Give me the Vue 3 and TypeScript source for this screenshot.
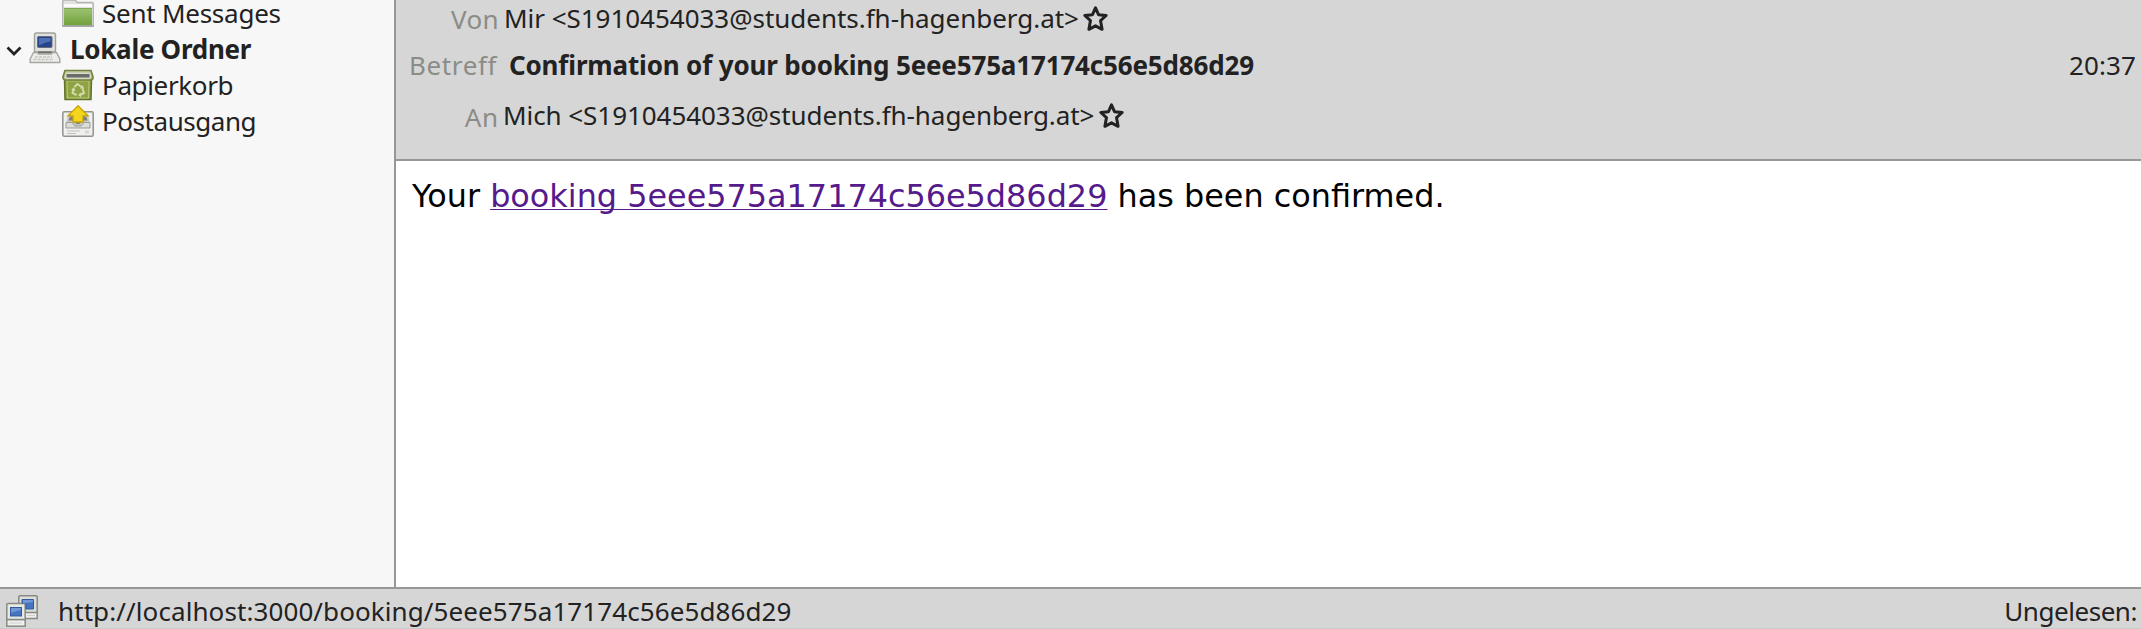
<script setup lang="ts">
interface Folder {
  id: string
  label: string
}

const localFolders: Folder[] = [
  { id: 'trash', label: 'Papierkorb' },
  { id: 'outbox', label: 'Postausgang' },
]

const bookingId = '5eee575a17174c56e5d86d29'
const address = '<S1910454033@students.fh-hagenberg.at>'
const starPath = 'M13.5 2.8 L16.5 9.7 L24.2 10.5 L18.5 15.6 L20.1 24.3 L13.5 20.8 L6.9 24.3 L8.5 15.6 L2.8 10.5 L10.5 9.7 Z'
</script>

<template>
  <div class="client">
    <div class="panes">
      <nav class="sidebar">
        <div class="row child sent">
          <svg class="icon" viewBox="0 0 32 32">
            <defs>
              <linearGradient id="folderGreen" x1="0" y1="0" x2="0" y2="1">
                <stop offset="0" stop-color="#9cc372" />
                <stop offset="1" stop-color="#72a23c" />
              </linearGradient>
            </defs>
            <path d="M.7 31V6.500q0-1.500 1.500-1.500h11l2 2.500H30q1.300 0 1.300 1.500v22z" fill="#e3e3e0" stroke="#b3b3b0" stroke-width="1.300" />
            <path d="M2 10.500h28" stroke="#fff" stroke-width="2.500" />
            <rect x="2" y="13" width="28" height="17" fill="url(#folderGreen)" />
            <path d="M2 13.500h28" stroke="#7ea64f" />
            <path d="M.5 31h31" stroke="#999b94" stroke-width="1.400" />
          </svg>
          <span class="name">Sent Messages</span>
        </div>
        <div class="row account">
          <svg class="chevron" viewBox="0 0 16 10"><path d="M1.500 1.500 8 8l6.500-6.500" fill="none" stroke="#222" stroke-width="2.700" /></svg>
          <svg class="icon computer" viewBox="0 0 32 32">
            <rect x="5.500" y="1" width="21" height="19" rx="1.800" fill="#e0e0dc" stroke="#a0a19c" stroke-width="1.400" />
            <rect x="8.500" y="4.500" width="14.500" height="11" rx="1" fill="#27458a" stroke="#686c74" />
            <path d="M10 6h11.500v3.500q-5 .5-11.500 4z" fill="#5070b4" />
            <path d="M9 20.500h14" stroke="#6d6f6a" stroke-width="2.200" />
            <path d="M4.500 20.500 1.200 27v3.500h29.600V27l-3.300-6.500h-4l-1 1.500h-13l-1-1.500z" fill="#ececea" stroke="#a5a6a1" stroke-width="1.400" />
            <path d="M6 25h17M4.500 27.500h19" stroke="#c4c5bf" stroke-width="1.300" stroke-dasharray="3 1" />
          </svg>
          <span class="name">Lokale Ordner</span>
        </div>
        <div v-for="folder in localFolders" :key="folder.id" class="row child" :class="folder.id">
          <svg v-if="folder.id === 'trash'" class="icon" viewBox="0 0 32 32">
            <path d="M2.500 9h27L29 30.500H3z" fill="#8fa344" stroke="#60722b" stroke-width="1.500" />
            <path d="M5 12h22l-.5 17h-21z" fill="none" stroke="#b8c676" />
            <path d="M3 1.500h26l2 6.500q0 3-2.500 3h-25Q1 11 1 8z" fill="#c5cba6" stroke="#74823f" stroke-width="1.700" />
            <rect x="4" y="4.500" width="24" height="4.500" rx="1.200" fill="#686d68" stroke="#eceee5" stroke-width=".8" />
            <g opacity=".85">
              <path d="m12.500 18 3-3 4 3M20.500 20l1.500 4-4 2M14.500 26l-4-2 1-4" fill="none" stroke="#dde6b5" stroke-width="2" />
              <path d="m18 19.500 4 .5-1-4zM19 23.500l-3 2.500 3 2.500zM9 21l3-3 1.500 4z" fill="#dde6b5" />
            </g>
          </svg>
          <svg v-else class="icon" viewBox="0 0 32 32">
            <rect x=".8" y="6.800" width="30.400" height="24.400" rx="1.500" fill="#f0f0ee" stroke="#91938c" stroke-width="1.500" />
            <path d="m6 9.500-2 8.500v5h24v-5l-2-8.500z" fill="#c9cac5" />
            <path d="M8 11.500h16l1.500 4h-5l-3 3.500h-3l-3-3.500h-5z" fill="#7d7f7a" />
            <path d="M4 17.500h6l3 3.500h6l3-3.500h6V23H4z" fill="#dcdcd9" stroke="#9b9d96" />
            <path d="M5 26h13M5 28.500h9" stroke="#c0c1bc" stroke-width="1.200" />
            <path d="M23 25.500h4v3h-4z" fill="#d7d8d4" />
            <path d="m16 .8 10 10h-5V17H11v-6.200H6z" fill="#f4d51e" stroke="#c7a006" stroke-width="1.300" />
          </svg>
          <span class="name">{{ folder.label }}</span>
        </div>
      </nav>

      <main class="message">
        <header class="headers">
          <div class="field from">
            <span class="label">Von</span>
            <span class="value">Mir {{ address }}</span>
            <svg class="star" viewBox="0 0 27 27"><path :d="starPath" /></svg>
          </div>
          <div class="field subject">
            <span class="label">Betreff</span>
            <span class="value">Confirmation of your booking {{ bookingId }}</span>
            <time class="time">20:37</time>
          </div>
          <div class="field to">
            <span class="label">An</span>
            <span class="value">Mich {{ address }}</span>
            <svg class="star" viewBox="0 0 27 27"><path :d="starPath" /></svg>
          </div>
        </header>
        <article class="body">Your <a href="#" @click.prevent>booking {{ bookingId }}</a> has been confirmed.</article>
      </main>
    </div>

    <footer class="status">
      <svg class="network" viewBox="0 0 32 32">
        <g stroke="#878984" stroke-width="1.500">
          <rect x="14.500" y="17" width="16.700" height="6.500" fill="#eeeeec" />
          <rect x="12.800" y=".8" width="18.400" height="16.700" rx="1" fill="#deded9" />
          <rect x=".8" y="24.500" width="18.400" height="6.700" fill="#f1f1ef" />
          <rect x=".8" y="8.500" width="18.400" height="16" rx="1" fill="#e8e8e4" />
        </g>
        <g fill="#4774c0" stroke="#315a9e">
          <path d="M16 4.500h11.500v9.500H20V8h-4z" />
          <rect x="4.500" y="12.500" width="11" height="8.500" />
        </g>
        <path d="M5 13h10v2q-5 1-10 3zM17 5h10v2l-7 1h-3z" fill="#7097d4" />
        <path d="M21 20.500h8M3 28h13" stroke="#d0d1cc" />
      </svg>
      <span class="url">http://localhost:3000/booking/{{ bookingId }}</span>
      <span class="unread">Ungelesen:</span>
    </footer>
  </div>
</template>

<style>
body {
  margin: 0;
  overflow: hidden;
}
</style>

<style scoped>
.client {
  display: flex;
  flex-direction: column;
  box-sizing: border-box;
  height: 629px;
  overflow: hidden;
  background: #fff;
  color: #222;
  font: 26px/36px "Noto Sans", "Open Sans", sans-serif;
  white-space: nowrap;
}
.panes {
  display: flex;
  height: 587px;
}
.sidebar {
  box-sizing: border-box;
  width: 396px;
  border-right: 2px solid #979797;
  background: #f7f7f7;
  overflow: hidden;
}
.row {
  display: flex;
  align-items: center;
  height: 36px;
}
.row.sent {
  align-items: flex-start;
  height: 31px;
  line-height: 26px;
}
.child {
  padding-left: 62px;
  gap: 8px;
}
.icon {
  flex: none;
  width: 32px;
  height: 32px;
}
.sent .icon {
  margin-top: -5px;
}
.sent .name {
  letter-spacing: -0.25px;
}
.account {
  padding-left: 6px;
  font-weight: 700;
  letter-spacing: -0.27px;
}
.chevron {
  width: 16px;
  height: 10px;
  margin: 3px 7px 0 0;
}
.computer {
  margin: -2px 9px 0 0;
}
.trash .name {
  letter-spacing: -0.35px;
}
.outbox .name {
  letter-spacing: -0.45px;
}
.message {
  flex: 1;
  min-width: 0;
}
.headers {
  display: flex;
  flex-direction: column;
  box-sizing: border-box;
  height: 161px;
  border-bottom: 2px solid #979797;
  background: #d6d6d6;
}
.field {
  display: flex;
  align-items: flex-start;
  height: 36px;
}
.label {
  width: 103px;
  margin-right: 5px;
  text-align: right;
  color: #8b8c86;
  letter-spacing: 0.4px;
}
.from .label {
  padding-top: 1px;
}
.from .value {
  letter-spacing: -0.03px;
}
.subject {
  margin-top: 11px;
}
.subject .label {
  width: 101px;
  margin-right: 12px;
  letter-spacing: 0.6px;
}
.subject .value {
  font-weight: 700;
  letter-spacing: -0.16px;
}
.time {
  margin: 0 5px 0 auto;
  letter-spacing: 0.1px;
}
.to {
  margin-top: 14px;
}
.to .label {
  padding-top: 2px;
  letter-spacing: 0.8px;
}
.to .value {
  margin-left: -1px;
  letter-spacing: -0.06px;
}
.star {
  flex: none;
  width: 27px;
  height: 27px;
  margin: 5px 0 0 4px;
  fill: none;
  stroke: #222;
  stroke-width: 3;
  stroke-linejoin: round;
}
.from .star {
  margin-left: 3px;
}
.body {
  padding: 15px 16px;
  color: #000;
  font: 31.86px/40px "DejaVu Sans", sans-serif;
}
.body a {
  color: #551a8b;
  text-decoration-thickness: 1px;
  text-decoration-skip-ink: none;
  text-underline-offset: 2px;
}
.status {
  display: flex;
  align-items: flex-start;
  box-sizing: border-box;
  height: 42px;
  padding: 4px 4px 0 6px;
  border-top: 2px solid #979797;
  border-bottom: 1px solid #c9c9c9;
  background: #d6d6d6;
}
.network {
  flex: none;
  width: 32px;
  height: 32px;
  margin: 2px 20px 0 0;
}
.url {
  letter-spacing: 0.09px;
}
.unread {
  margin-left: auto;
  letter-spacing: -0.45px;
}
</style>
